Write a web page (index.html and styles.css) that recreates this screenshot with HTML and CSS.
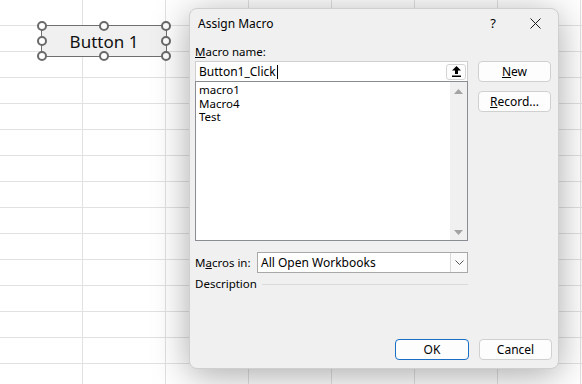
FILE: index.html
```html
<!DOCTYPE html>
<html lang="en">
<head>
  <meta charset="UTF-8">
  <title>Assign Macro</title>
  <link rel="stylesheet" href="styles.css">
</head>
<body>
  <div class="sheet">
    <div class="form-button">
      Button 1
      <span class="handle h-tl"></span>
      <span class="handle h-tc"></span>
      <span class="handle h-tr"></span>
      <span class="handle h-ml"></span>
      <span class="handle h-mr"></span>
      <span class="handle h-bl"></span>
      <span class="handle h-bc"></span>
      <span class="handle h-br"></span>
    </div>

    <div class="dialog">
      <div class="title-bar">
        <span class="title">Assign Macro</span>
        <span class="help">?</span>
        <svg class="close" width="11" height="11" viewBox="0 0 11 11">
          <path d="M0.5 0.5 L10.5 10.5 M10.5 0.5 L0.5 10.5" stroke="#1a1a1a" stroke-width="1"/>
        </svg>
      </div>

      <div class="dialog-body">
        <div class="main-col">
          <div class="label"><u>M</u>acro name:</div>
          <div class="name-box">
            <span class="name-text">Button1_Click</span><span class="caret"></span>
            <span class="collapse-btn">
              <svg width="9" height="11" viewBox="0 0 9 11">
                <path d="M4.5 0 L9 4.5 L6 4.5 L6 8 L3 8 L3 4.5 L0 4.5 Z" fill="#000"/>
                <rect x="0" y="9.5" width="9" height="1.5" fill="#000"/>
              </svg>
            </span>
          </div>
          <div class="list-box">
            <ul class="macro-list">
              <li>macro1</li>
              <li>Macro4</li>
              <li>Test</li>
            </ul>
            <div class="scrollbar">
              <svg width="9" height="5" viewBox="0 0 9 5"><path d="M0 5 L4.5 0 L9 5 Z" fill="#a3a3a3"/></svg>
              <svg width="9" height="5" viewBox="0 0 9 5"><path d="M0 0 L4.5 5 L9 0 Z" fill="#a3a3a3"/></svg>
            </div>
          </div>
          <div class="macros-in">
            <span class="label">M<u>a</u>cros in:</span>
            <div class="combo">
              <span class="combo-text">All Open Workbooks</span>
              <span class="combo-arrow">
                <svg width="9" height="5" viewBox="0 0 9 5"><path d="M0.5 0.5 L4.5 4.5 L8.5 0.5" fill="none" stroke="#555" stroke-width="1"/></svg>
              </span>
            </div>
          </div>
          <div class="description">
            <span class="label">Description</span>
            <span class="rule"></span>
          </div>
        </div>

        <div class="side-col">
          <button class="btn"><u>N</u>ew</button>
          <button class="btn"><u>R</u>ecord...</button>
        </div>
      </div>

      <div class="footer">
        <button class="btn btn-default">OK</button>
        <button class="btn">Cancel</button>
      </div>
    </div>
  </div>
</body>
</html>
```

FILE: styles.css
```css
body {
  margin: 0;
  font-family: "Segoe UI", "Noto Sans", sans-serif;
  font-size: 11.5px;
  color: #000;
}
.sheet {
  position: relative;
  width: 582px;
  height: 384px;
  overflow: hidden;
  background-color: #fff;
  background-image:
    linear-gradient(to right, transparent 82px, #e1e1e1 82px, #e1e1e1 83px, transparent 83px),
    linear-gradient(to bottom, transparent 25px, #e1e1e1 25px, #e1e1e1 26px, transparent 26px);
  background-size: 83px 26px;
}

/* button drawn on the worksheet */
.form-button {
  position: absolute;
  left: 41px;
  top: 25px;
  width: 126px;
  height: 32px;
  box-sizing: border-box;
  border: 1px solid #6f6f6f;
  background: #f0f0f0;
  display: flex;
  align-items: center;
  justify-content: center;
  font-size: 17px;
  color: #111;
}
.handle {
  position: absolute;
  width: 10px;
  height: 10px;
  box-sizing: border-box;
  border: 2px solid #6a6a6a;
  border-radius: 50%;
  background: #fff;
  margin: -5px 0 0 -5px;
}
.h-tl { left: 0; top: 0; }
.h-tc { left: 50%; top: 0; }
.h-tr { left: 100%; top: 0; }
.h-ml { left: 0; top: 50%; }
.h-mr { left: 100%; top: 50%; }
.h-bl { left: 0; top: 100%; }
.h-bc { left: 50%; top: 100%; }
.h-br { left: 100%; top: 100%; }

/* dialog window */
.dialog {
  position: absolute;
  left: 189px;
  top: 8px;
  width: 370px;
  height: 361px;
  box-sizing: border-box;
  background: #f0f0f0;
  border: 1px solid #cfcfcf;
  border-radius: 8px;
  box-shadow: 0 6px 36px rgba(0,0,0,0.34);
  display: flex;
  flex-direction: column;
}
.title-bar {
  height: 28px;
  display: flex;
  align-items: center;
  padding: 0 17px 0 8px;
}
.title {
  flex: 1;
  font-size: 12px;
}
.help {
  font-size: 13px;
  margin-right: 34px;
}

.dialog-body {
  display: flex;
  gap: 10px;
  padding: 8px 7px 0 5px;
}
.main-col {
  width: 273px;
  display: flex;
  flex-direction: column;
}
.label {
  line-height: 14px;
  white-space: nowrap;
}
.main-col > .label {
  margin-bottom: 2px;
}

.name-box {
  height: 20px;
  box-sizing: border-box;
  background: #fff;
  border: 1px solid #cfcfcf;
  border-bottom: none;
  display: flex;
  align-items: center;
  padding-left: 3px;
  font-size: 12px;
}
.caret {
  width: 1px;
  height: 14px;
  background: #000;
  margin-left: 1px;
}
.name-text {
  line-height: 16px;
}
.collapse-btn {
  margin-left: auto;
  margin-right: 1px;
  width: 20px;
  height: 16px;
  box-sizing: border-box;
  border: 1px solid #d4d4d4;
  border-radius: 3px;
  background: #fdfdfd;
  display: flex;
  align-items: center;
  justify-content: center;
}

.list-box {
  height: 160px;
  box-sizing: border-box;
  border: 1px solid #8a8d93;
  background: #fff;
  display: flex;
}
.macro-list {
  flex: 1;
  list-style: none;
  margin: 0;
  padding: 1px 3px;
}
.macro-list li {
  line-height: 13.5px;
}
.scrollbar {
  width: 17px;
  background: #f0f0f0;
  display: flex;
  flex-direction: column;
  justify-content: space-between;
  align-items: center;
  padding: 7px 0 5px;
}

.macros-in {
  display: flex;
  align-items: center;
  margin-top: 11px;
  justify-content: space-between;
}
.combo {
  width: 211px;
  height: 21px;
  box-sizing: border-box;
  border: 1px solid #a8a8a8;
  background: #fff;
  display: flex;
  align-items: center;
  font-size: 12px;
}
.combo-text {
  flex: 1;
  padding-left: 3px;
}
.combo-arrow {
  width: 16px;
  height: 19px;
  border-left: 1px solid #d8d8d8;
  background: #fafafa;
  display: flex;
  align-items: center;
  justify-content: center;
}

.description {
  display: flex;
  align-items: center;
  margin-top: 4px;
  gap: 5px;
}
.rule {
  flex: 1;
  height: 1px;
  background: #dadada;
}

.side-col {
  display: flex;
  flex-direction: column;
  gap: 9px;
  padding-top: 16px;
}
.btn {
  width: 73px;
  height: 21px;
  box-sizing: border-box;
  border: 1px solid #d0d0d0;
  border-radius: 4px;
  background: #fdfdfd;
  font-family: inherit;
  font-size: 12px;
  color: #000;
  padding: 0;
}
.btn-default {
  border-color: #1a6fc4;
  width: 74px;
}

.footer {
  margin-top: auto;
  display: flex;
  justify-content: flex-end;
  gap: 10px;
  padding: 0 6px 8px 0;
}
```
